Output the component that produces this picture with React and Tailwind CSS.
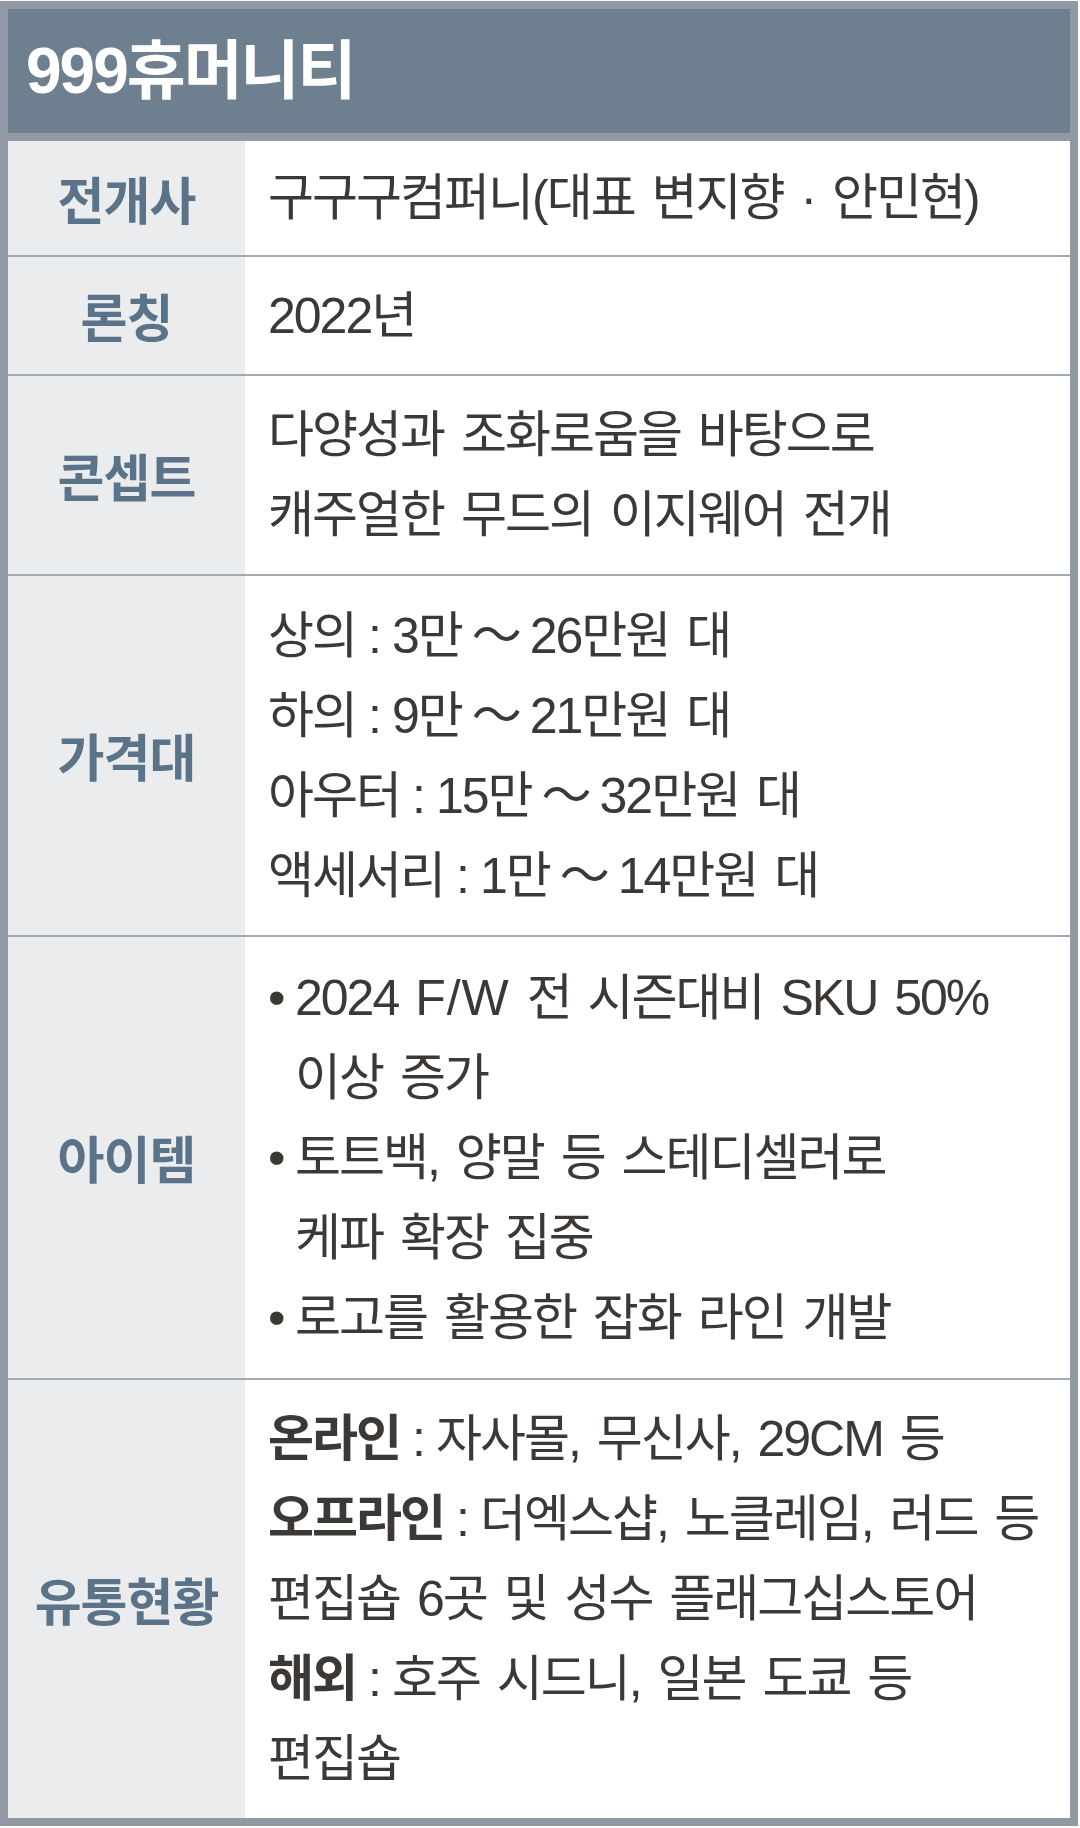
import React from 'react';

const BODY_FONT = "font-['Liberation_Sans','Noto_Sans_CJK_KR',sans-serif]";

const Tilde = () => <span className="mx-[10px]">～</span>;

// row heights include the 2px divider on top (except the first)
const ROWS = [
  { label: '전개사', height: 'h-[114px]', lines: ['구구구컴퍼니(대표 변지향 · 안민현)'] },
  { label: '론칭', height: 'h-[119px] border-t-2', lines: ['2022년'] },
  {
    label: '콘셉트',
    height: 'h-[200px] border-t-2',
    lines: ['다양성과 조화로움을 바탕으로', '캐주얼한 무드의 이지웨어 전개']
  },
  {
    label: '가격대',
    height: 'h-[361px] border-t-2',
    lines: [
      { head: '상의', rest: <>3만<Tilde />26만원 대</> },
      { head: '하의', rest: <>9만<Tilde />21만원 대</> },
      { head: '아우터', rest: <>15만<Tilde />32만원 대</> },
      { head: '액세서리', rest: <>1만<Tilde />14만원 대</> }
    ]
  },
  {
    label: '아이템',
    height: 'h-[443px] border-t-2',
    bullets: [
      [<>2024 <span className="tracking-[1px]">F/W</span> 전 시즌대비 SKU 50%</>, '이상 증가'],
      ['토트백, 양말 등 스테디셀러로', '케파 확장 집중'],
      ['로고를 활용한 잡화 라인 개발']
    ]
  },
  {
    label: '유통현황',
    height: 'h-[440px] border-t-2',
    lines: [
      { head: '온라인', bold: true, rest: '자사몰, 무신사, 29CM 등' },
      { head: '오프라인', bold: true, rest: '더엑스샵, 노클레임, 러드 등' },
      '편집숍 6곳 및 성수 플래그십스토어',
      { head: '해외', bold: true, rest: '호주 시드니, 일본 도쿄 등' },
      '편집숍'
    ]
  }
];

function Line({ line }) {
  if (typeof line === 'string' || React.isValidElement(line)) {
    return <div className="leading-[80px] whitespace-nowrap">{line}</div>;
  }
  return (
    <div className="leading-[80px] whitespace-nowrap">
      <span className={line.bold ? 'font-bold' : ''}>{line.head}</span>
      <span className="mx-[12px]">:</span>
      {line.rest}
    </div>
  );
}

function Row({ row }) {
  return (
    <div className={`flex border-[#a2aab5] ${row.height}`}>
      <div className="w-[237px] shrink-0 bg-[#ebecee] flex items-center justify-center">
        <span className="font-['Noto_Sans_CJK_KR',sans-serif] font-bold text-[51px] tracking-[-1px] text-[#5b7389]">
          {row.label}
        </span>
      </div>
      <div
        className={`flex-1 bg-white pl-[23px] flex flex-col justify-center text-[50px] tracking-[-2px] [word-spacing:5px] text-[#3c3836] ${BODY_FONT}`}
      >
        {row.lines && row.lines.map((line, i) => <Line key={i} line={line} />)}
        {row.bullets &&
          row.bullets.map((item, i) => (
            <div key={i} className="flex">
              <span className="w-[27px] shrink-0 leading-[80px]">•</span>
              <div>
                {item.map((line, j) => (
                  <Line key={j} line={line} />
                ))}
              </div>
            </div>
          ))}
      </div>
    </div>
  );
}

export default function App() {
  return (
    <div className="w-[1080px] h-[1828px] bg-white pt-px pr-[2px] pb-[2px]">
      <div className="h-full border-8 border-[#9199a6] flex flex-col">
        <div className="h-[132px] shrink-0 bg-[#6e7f8f] border-b-8 border-[#9199a6] flex items-center pl-[18px]">
          <h1 className="font-['Liberation_Sans','Noto_Sans_CJK_KR',sans-serif] font-bold text-[64px] tracking-[-2px] text-white">
            999휴머니티
          </h1>
        </div>
        {ROWS.map((row) => (
          <Row key={row.label} row={row} />
        ))}
      </div>
    </div>
  );
}
